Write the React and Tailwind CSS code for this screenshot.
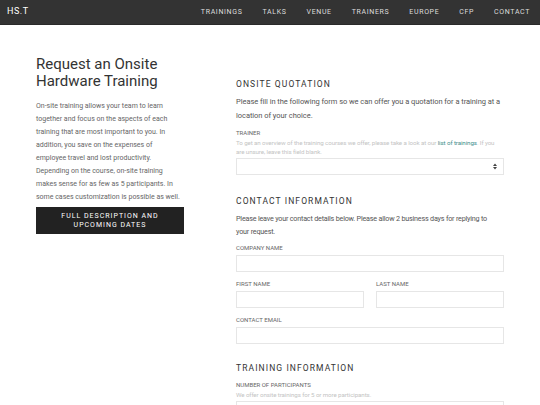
import React from 'react';

const nav = ['TRAININGS', 'TALKS', 'VENUE', 'TRAINERS', 'EUROPE', 'CFP', 'CONTACT'];

function Label({ children }) {
  return <div className="text-[6px] leading-[8px] text-[#666] uppercase mb-[3px]">{children}</div>;
}

function Input({ className = '' }) {
  return <div className={`h-[17px] border border-[#e6e6e6] bg-white ${className}`} />;
}

function Heading({ children, className = '' }) {
  return (
    <h2 className={`text-[8.5px] leading-[12px] tracking-[1.1px] text-[#333] uppercase ${className}`}>
      {children}
    </h2>
  );
}

function Help({ children }) {
  return <p className="text-[6.2px] leading-[9px] text-[#c4c4c4] -mt-[1px] mb-[1px] tracking-[-0.1px]">{children}</p>;
}

export default function App() {
  return (
    <div className="w-[540px] h-[405px] overflow-hidden bg-white" style={{ fontFamily: 'Roboto, "Open Sans", sans-serif' }}>
      <header className="h-[25px] bg-[#333] flex items-center justify-between pl-[7px] pr-[10px] border-b border-[#2a2a2a]">
        <span className="text-white text-[9px] tracking-[0.5px]">HS.T</span>
        <nav className="flex gap-[20px]">
          {nav.map((n) => (
            <span key={n} className="text-[#ddd] text-[7px] tracking-[0.65px]">{n}</span>
          ))}
        </nav>
      </header>

      <main className="mx-[36px] flex gap-[52px] pt-[31px]">
        <aside className="w-[148px] shrink-0">
          <h1 className="text-[15px] leading-[17px] text-[#333]">Request an Onsite Hardware Training</h1>
          <p className="mt-[10px] text-[7px] leading-[13px] text-[#666]">
            On-site training allows your team to learn together and focus on the aspects of each training that are
            most important to you. In addition, you save on the expenses of employee travel and lost productivity.
            Depending on the course, on-site training makes sense for as few as 5 participants. In some cases
            customization is possible as well.
          </p>
          <button className="mt-[3px] w-full h-[27px] bg-[#222] text-white text-[7px] leading-[9px] tracking-[1px] flex flex-col items-center justify-center">
            <span>FULL DESCRIPTION AND</span>
            <span>UPCOMING DATES</span>
          </button>
        </aside>

        <section className="w-[268px] pt-[22px]">
          <Heading>Onsite Quotation</Heading>
          <p className="mt-[5px] text-[7.5px] leading-[14px] text-[#555] tracking-[-0.05px]">
            Please fill in the following form so we can offer you a quotation for a training at a location of your choice.
          </p>
          <div className="mt-[6px]">
            <Label>Trainer</Label>
            <Help>
              <span className="whitespace-nowrap">
                To get an overview of the training courses we offer, please take a look at our{' '}
                <span className="text-[#3f8f8c]">list of trainings</span>. If you
              </span>
              <br />
              are unsure, leave this field blank.
            </Help>
            <div className="h-[17px] border border-[#e6e6e6] flex items-center justify-end pr-[6px]">
              <svg width="4" height="7" viewBox="0 0 4 7">
                <path d="M0 3 L2 0.5 L4 3 Z M0 4 L2 6.5 L4 4 Z" fill="#444" />
              </svg>
            </div>
          </div>

          <Heading className="mt-[20px]">Contact Information</Heading>
          <p className="mt-[5px] text-[7.2px] leading-[13px] text-[#555] tracking-[-0.2px]">
            <span className="whitespace-nowrap">
              Please leave your contact details below. Please allow 2 business days for replying to
            </span>
            <br />
            your request.
          </p>
          <div className="mt-[6px]">
            <Label>Company Name</Label>
            <Input />
          </div>
          <div className="mt-[8px] flex gap-[12px]">
            <div className="flex-1">
              <Label>First Name</Label>
              <Input />
            </div>
            <div className="flex-1">
              <Label>Last Name</Label>
              <Input />
            </div>
          </div>
          <div className="mt-[8px]">
            <Label>Contact Email</Label>
            <Input />
          </div>

          <Heading className="mt-[18px]">Training Information</Heading>
          <div className="mt-[7px]">
            <Label>Number of Participants</Label>
            <Help>We offer onsite trainings for 5 or more participants.</Help>
            <Input />
          </div>
        </section>
      </main>
    </div>
  );
}
